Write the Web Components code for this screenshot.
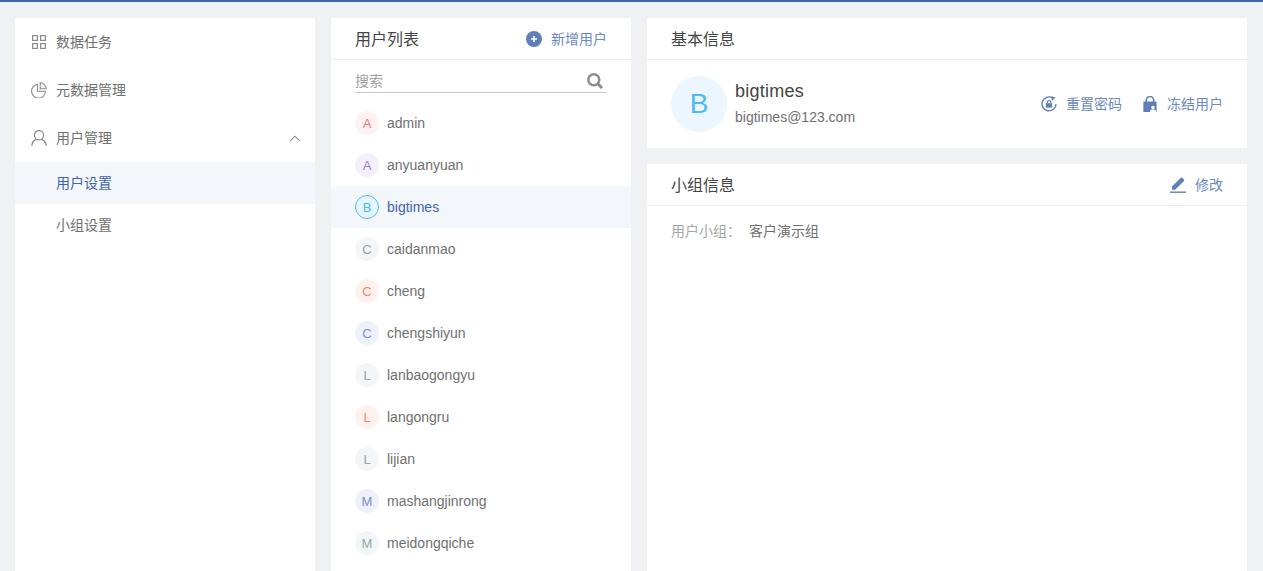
<!DOCTYPE html>
<html lang="zh">
<head>
<meta charset="utf-8">
<title>用户设置</title>
<style>
html, body { margin: 0; height: 100%; overflow: hidden; }
body {
    background: #f0f1f3;
    font-family: "Liberation Sans", "Noto Sans CJK SC", sans-serif;
    font-size: 14px;
    color: #707070;
}
</style>
</head>
<body>
<app-shell>
    <side-nav slot="nav">
        <nav-item label="数据任务" icon="grid"></nav-item>
        <nav-item label="元数据管理" icon="pie"></nav-item>
        <nav-item label="用户管理" icon="user" open></nav-item>
        <nav-item label="用户设置" sub active></nav-item>
        <nav-item label="小组设置" sub></nav-item>
    </side-nav>
    <user-list slot="list">
        <user-row name="admin" letter="A" fg="#f5737c" bg="#fdf1f1"></user-row>
        <user-row name="anyuanyuan" letter="A" fg="#9b7cc8" bg="#f3f0f9"></user-row>
        <user-row name="bigtimes" letter="B" fg="#4fb9f5" bg="#e6f4fc" active></user-row>
        <user-row name="caidanmao" letter="C" fg="#8fa6ab" bg="#f3f5f6"></user-row>
        <user-row name="cheng" letter="C" fg="#fb7f6b" bg="#fef2ef"></user-row>
        <user-row name="chengshiyun" letter="C" fg="#7b8dd4" bg="#eff1f9"></user-row>
        <user-row name="lanbaogongyu" letter="L" fg="#8fa6b5" bg="#f3f5f6"></user-row>
        <user-row name="langongru" letter="L" fg="#fb7f6b" bg="#fef2ef"></user-row>
        <user-row name="lijian" letter="L" fg="#8fa6ab" bg="#f3f5f6"></user-row>
        <user-row name="mashangjinrong" letter="M" fg="#7b8dd4" bg="#eff1f9"></user-row>
        <user-row name="meidongqiche" letter="M" fg="#8fa6ab" bg="#f3f5f6"></user-row>
    </user-list>
    <info-card slot="detail" heading="基本信息">
        <user-summary name="bigtimes" email="bigtimes@123.com" letter="B">
            <link-action label="重置密码" icon="reset"></link-action>
            <link-action label="冻结用户" icon="lock"></link-action>
        </user-summary>
    </info-card>
    <info-card slot="detail" heading="小组信息" grow>
        <link-action slot="action" label="修改" icon="edit"></link-action>
        <group-info label="用户小组：" value="客户演示组"></group-info>
    </info-card>
</app-shell>

<script>
const ICONS = {
    grid: `<svg width="16" height="16" viewBox="0 0 16 16" fill="none" stroke="#8c8c8c" stroke-width="1.2">
            <rect x="1.6" y="1.6" width="4.8" height="4.8"/><rect x="9.6" y="1.6" width="4.8" height="4.8"/>
            <rect x="1.6" y="9.6" width="4.8" height="4.8"/><rect x="9.6" y="9.6" width="4.8" height="4.8"/>
        </svg>`,
    pie: `<svg width="16" height="16" viewBox="0 0 16 16" fill="none" stroke="#8c8c8c" stroke-width="1.1">
            <path d="M6.5 2.4A6.9 6.9 0 1 0 14.4 9.3H6.5Z"/>
            <path d="M9.2 .7A6.4 6.4 0 0 1 15.3 6.8H9.2Z"/>
        </svg>`,
    user: `<svg width="16" height="16" viewBox="0 0 16 16" fill="none" stroke="#8c8c8c" stroke-width="1.3">
            <circle cx="8" cy="5.2" r="4.6"/>
            <path d="M.8 15.8C1 12.6 2.800 10.400 5 9.300M15.200 15.800C15 12.600 13.200 10.400 11 9.300"/>
        </svg>`,
    plus: `<svg width="16" height="16" viewBox="0 0 16 16">
            <circle cx="8" cy="8" r="8" fill="#5f7fb9"/>
            <path d="M8 5v6M5 8h6" stroke="#fff" stroke-width="1.6"/>
        </svg>`,
    reset: `<svg width="16" height="16" viewBox="0 0 16 16" fill="none">
            <path d="M11.6 1.900A7 7 0 1 0 15 8" stroke="#5f7fb9" stroke-width="1.400"/>
            <path d="M10.200 .2 14.600 1.400 11.200 4.800Z" fill="#5f7fb9"/>
            <path d="M6.200 7.300V6.400a1.800 1.800 0 0 1 3.600 0v.9" stroke="#5f7fb9" stroke-width="1.100"/>
            <rect x="4.900" y="7.200" width="6.200" height="4.400" fill="#5f7fb9"/>
        </svg>`,
    lock: `<svg width="15" height="16" viewBox="0 0 15 16">
            <path d="M3.300 6V4.200a3.700 3.700 0 0 1 7.400 0V6" fill="none" stroke="#5f7fb9" stroke-width="1.600"/>
            <path d="M1.200 5.600h11.600a.8.8 0 0 1 .8.8V16H.4V6.400a.8.8 0 0 1 .8-.8Z" fill="#5f7fb9"/>
            <circle cx="10" cy="11.400" r="1.700" fill="#fff"/>
            <path d="M6.800 16c0-1.900 1.400-2.800 3.200-2.800s3.200.9 3.200 2.800Z" fill="#fff"/>
        </svg>`,
    edit: `<svg width="16" height="16" viewBox="0 0 16 16">
            <path d="M2 12.800V9.600L10.800.8a1 1 0 0 1 1.400 0l1.800 1.800a1 1 0 0 1 0 1.400L5.200 12.800Z" fill="#5f7fb9"/>
            <path d="M0 15.200h16" stroke="#5f7fb9" stroke-width="1.400"/>
        </svg>`,
    search: `<svg width="16" height="16" viewBox="0 0 16 16" fill="none" stroke="#8c8c8c">
            <circle cx="6.800" cy="6.800" r="5.500" stroke-width="2.500"/>
            <path d="M10.800 10.800 15 15" stroke-width="3"/>
        </svg>`
};

class AppShell extends HTMLElement {
    constructor() {
        super();
        this.attachShadow({ mode: "open" });
        this.shadowRoot.innerHTML = `
        <style>
        :host { display: flex; box-sizing: border-box; height: 100vh; border-top: 2px solid #3f65ab; padding: 16px 16px 0 15px; gap: 16px; }
        .col { width: 300px; flex: none; display: flex; }
        .col ::slotted(*) { flex: 1; }
        #detail { flex: 1; display: flex; flex-direction: column; gap: 16px; min-width: 0; }
        </style>
        <div class="col"><slot name="nav"></slot></div>
        <div class="col"><slot name="list"></slot></div>
        <div id="detail"><slot name="detail"></slot></div>`;
    }
}
customElements.define("app-shell", AppShell);

class SideNav extends HTMLElement {
    constructor() {
        super();
        this.attachShadow({ mode: "open" });
        this.shadowRoot.innerHTML = `
        <style>:host { display: block; background: #fff; }</style>
        <slot></slot>`;
    }
}
customElements.define("side-nav", SideNav);

class NavItem extends HTMLElement {
    constructor() {
        super();
        this.attachShadow({ mode: "open" });
    }
    connectedCallback() {
        const icon = this.getAttribute("icon");
        const chevron = this.hasAttribute("open") ? `<svg id="chev" width="12" height="7" viewBox="0 0 12 7" fill="none" stroke="#8c8c8c" stroke-width="1.100"><path d="M1 6.200 6 1.200l5 5"/></svg>` : "";
        this.shadowRoot.innerHTML = `
        <style>
        :host { display: flex; align-items: center; height: 48px; padding: 0 14px 0 16px; color: #707070; }
        :host([sub]) { height: 42px; padding-left: 41px; }
        :host([active]) { background: #f3f6fb; color: #3f65ab; }
        #ico { width: 16px; height: 16px; margin-right: 9px; display: flex; }
        #label { flex: 1; padding-bottom: 2px; }
        #chev { display: block; }
        </style>
        ${icon ? `<span id="ico">${ICONS[icon]}</span>` : ""}
        <span id="label">${this.getAttribute("label")}</span>
        ${chevron}`;
    }
}
customElements.define("nav-item", NavItem);

class UserList extends HTMLElement {
    constructor() {
        super();
        this.attachShadow({ mode: "open" });
        this.shadowRoot.innerHTML = `
        <style>
        :host { display: block; background: #fff; overflow: hidden; }
        header { display: flex; align-items: center; justify-content: space-between; height: 41px; padding: 0 24px; border-bottom: 1px solid #eceef0; font-size: 16px; color: #444; }
        header span { padding-bottom: 2px; }
        #search { display: flex; align-items: center; justify-content: space-between; height: 33px; margin: 0 24px 9px; box-sizing: border-box; border-bottom: 1px solid #c8c8c8; padding-top: 8px; color: #a0a0a0; }
        #search svg { display: block; margin-right: 4px; margin-top: 2px; }
        </style>
        <header><span>用户列表</span><link-action label="新增用户" icon="plus"></link-action></header>
        <div id="search"><span>搜索</span>${ICONS.search}</div>
        <slot></slot>`;
    }
}
customElements.define("user-list", UserList);

class UserRow extends HTMLElement {
    constructor() {
        super();
        this.attachShadow({ mode: "open" });
    }
    connectedCallback() {
        const fg = this.getAttribute("fg");
        const bg = this.getAttribute("bg");
        this.shadowRoot.innerHTML = `
        <style>
        :host { display: flex; align-items: center; height: 42px; padding-left: 24px; gap: 8px; color: #707070; }
        :host([active]) { background: #f3f6fb; color: #3f65ab; }
        #av { width: 24px; height: 24px; border-radius: 50%; display: flex; align-items: center; justify-content: center; font-size: 13px; color: ${fg}; background: ${bg}; box-sizing: border-box; }
        :host([active]) #av { border: 1px solid ${fg}; }
        </style>
        <span id="av">${this.getAttribute("letter")}</span>
        <span>${this.getAttribute("name")}</span>`;
    }
}
customElements.define("user-row", UserRow);

class InfoCard extends HTMLElement {
    constructor() {
        super();
        this.attachShadow({ mode: "open" });
    }
    connectedCallback() {
        this.shadowRoot.innerHTML = `
        <style>
        :host { display: block; background: #fff; }
        :host([grow]) { flex: 1; }
        header { display: flex; align-items: center; justify-content: space-between; height: 41px; padding: 0 24px; border-bottom: 1px solid #eceef0; font-size: 16px; color: #444; }
        header span { padding-bottom: 2px; }
        </style>
        <header><span>${this.getAttribute("heading")}</span><slot name="action"></slot></header>
        <slot></slot>`;
    }
}
customElements.define("info-card", InfoCard);

class UserSummary extends HTMLElement {
    constructor() {
        super();
        this.attachShadow({ mode: "open" });
    }
    connectedCallback() {
        this.shadowRoot.innerHTML = `
        <style>
        :host { display: flex; align-items: center; height: 88px; padding: 0 24px; }
        #av { width: 56px; height: 56px; border-radius: 50%; background: #ebf6fe; color: #4fb9f5; font-size: 28px; display: flex; align-items: center; justify-content: center; margin-right: 8px; }
        #who { flex: 1; padding-bottom: 2px; }
        #name { font-size: 18px; color: #444; line-height: 24px; margin-bottom: 4px; letter-spacing: .25px; }
        #mail { color: #707070; line-height: 20px; }
        #acts { display: flex; gap: 21px; }
        </style>
        <span id="av">${this.getAttribute("letter")}</span>
        <div id="who">
            <div id="name">${this.getAttribute("name")}</div>
            <div id="mail">${this.getAttribute("email")}</div>
        </div>
        <div id="acts"><slot></slot></div>`;
    }
}
customElements.define("user-summary", UserSummary);

class LinkAction extends HTMLElement {
    constructor() {
        super();
        this.attachShadow({ mode: "open" });
    }
    connectedCallback() {
        this.shadowRoot.innerHTML = `
        <style>
        :host { display: inline-flex; align-items: center; gap: 9px; font-size: 14px; color: #6c89bf; }
        svg { display: block; }
        span { padding-bottom: 2px; }
        </style>
        ${ICONS[this.getAttribute("icon")]}
        <span>${this.getAttribute("label")}</span>`;
    }
}
customElements.define("link-action", LinkAction);

class GroupInfo extends HTMLElement {
    constructor() {
        super();
        this.attachShadow({ mode: "open" });
    }
    connectedCallback() {
        this.shadowRoot.innerHTML = `
        <style>
        :host { display: flex; padding: 15px 24px; line-height: 20px; }
        #k { color: #a6a6a6; width: 78px; }
        #v { color: #707070; }
        </style>
        <span id="k">${this.getAttribute("label")}</span>
        <span id="v">${this.getAttribute("value")}</span>`;
    }
}
customElements.define("group-info", GroupInfo);
</script>
</body>
</html>
